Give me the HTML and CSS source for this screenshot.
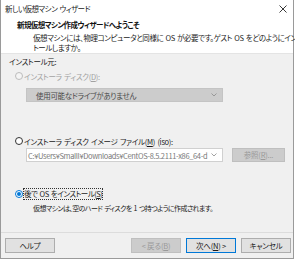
FILE: index.html
```html
<!DOCTYPE html>
<html lang="ja">
<head>
<meta charset="utf-8">
<link rel="stylesheet" href="styles.css">
</head>
<body>
<div class="window">
  <div class="titlebar">
    <span class="title">新しい仮想マシン ウィザード</span>
    <svg class="close" width="8" height="8" viewBox="0 0 8 8"><path d="M0.5 0.5 L7.5 7.5 M7.5 0.5 L0.5 7.5" stroke="#222" stroke-width="0.9" fill="none"/></svg>
  </div>
  <div class="header">
    <div class="h-title">新規仮想マシン作成ウィザードへようこそ</div>
    <div class="h-desc">
      <div class="h-line">仮想マシンには、物理コンピュータと同様に OS が必要です。ゲスト OS をどのようにインス</div>
      <div class="h-line">トールしますか。</div>
    </div>
  </div>
  <div class="content">
    <div class="label">インストール元:</div>
    <div class="radio-row r1 disabled">
      <span class="radio"></span>
      <span>インストーラ ディスク(<u>D</u>):</span>
    </div>
    <div class="combo disabled-combo">
      <span class="combo-text">使用可能なドライブがありません</span>
      <svg class="chev" width="6" height="4" viewBox="0 0 6 4"><path d="M0.5 0.5 L3 3 L5.5 0.5" stroke="#8a8a8a" stroke-width="0.8" fill="none"/></svg>
    </div>
    <div class="radio-row r2">
      <span class="radio"></span>
      <span>インストーラ ディスク イメージ ファイル(<u>M</u>) (iso):</span>
    </div>
    <div class="path-row">
      <div class="combo path-combo">
        <span class="combo-text path-text">C:¥Users¥Smalll¥Downloads¥CentOS-8.5.2111-x86_64-d</span>
        <svg class="chev" width="6" height="4" viewBox="0 0 6 4"><path d="M0.5 0.5 L3 3 L5.5 0.5" stroke="#8a8a8a" stroke-width="0.8" fill="none"/></svg>
      </div>
      <button class="btn disabled-btn browse">参照(<u>R</u>)...</button>
    </div>
    <div class="radio-row r3">
      <span class="radio checked"></span>
      <span class="focus">後で OS をインストール(<u>S</u>)</span>
    </div>
    <div class="later-desc">仮想マシンは、空のハード ディスクを 1 つ持つように作成されます。</div>
  </div>
  <div class="footer">
    <button class="btn">ヘルプ</button>
    <button class="btn disabled-btn back">&lt; 戻る(<u>B</u>)</button>
    <button class="btn default">次へ(<u>N</u>) &gt;</button>
    <button class="btn">キャンセル</button>
  </div>
</div>
</body>
</html>
```
FILE: styles.css
```css
html, body {
  margin: 0;
  padding: 0;
  background: #ffffff;
}
body {
  font-family: "Noto Sans CJK JP", "Noto Sans", sans-serif;
  font-size: 7.5px;
  font-feature-settings: "palt";
  letter-spacing: -0.3px;
  word-spacing: 1px;
  color: #1a1a1a;
}
.window {
  width: 292px;
  height: 258px;
  border-left: 1px solid #9a9a9a;
  border-right: 1px solid #9a9a9a;
  border-bottom: 1px solid #9a9a9a;
  display: flex;
  flex-direction: column;
  background: #f0f0f0;
}
.titlebar {
  height: 17px;
  background: #fff;
  display: flex;
  align-items: center;
  padding-left: 4px;
  padding-right: 6px;
}
.title {
  flex: 1;
  font-size: 7.5px;
  letter-spacing: -0.5px;
  color: #222;
}
.close {
  display: block;
}
.header {
  background: #fff;
  height: 37px;
  border-bottom: 1px solid #e4e4e4;
  box-sizing: border-box;
  padding-left: 16px;
  padding-top: 2px;
}
.h-title {
  font-weight: bold;
  font-size: 7.5px;
  letter-spacing: -0.6px;
  line-height: 12px;
  color: #111;
}
.h-desc {
  margin-top: 2px;
  padding-left: 16px;
  line-height: 10px;
  font-size: 7.5px;
  letter-spacing: -0.42px;
  color: #222;
}
.h-line {
  white-space: nowrap;
  width: max-content;
}
.content {
  flex: 1;
  padding-left: 8px;
  padding-top: 2px;
  display: flex;
  flex-direction: column;
  align-items: flex-start;
  border-bottom: 1px solid #dcdcdc;
}
.label {
  line-height: 12px;
  height: 12px;
}
.radio-row {
  display: flex;
  align-items: center;
  height: 12px;
  padding-left: 6px;
}
.r1 { margin-top: 2px; }
.r2 { margin-top: 33px; }
.r3 { margin-top: 26px; }
.disabled { color: #a2a2a2; }
.radio {
  width: 8px;
  height: 8px;
  border: 1px solid #333;
  border-radius: 50%;
  box-sizing: border-box;
  margin-right: 1px;
  background: #fff;
  position: relative;
  flex: none;
}
.disabled .radio {
  border-color: #bcbcbc;
  background: #f4f4f4;
}
.radio.checked {
  border-color: #0078d7;
}
.radio.checked::after {
  content: "";
  position: absolute;
  left: 1px;
  top: 1px;
  width: 4px;
  height: 4px;
  border-radius: 50%;
  background: #0078d7;
}
.focus {
  outline: 1px dotted #333;
  outline-offset: 0;
  line-height: 10px;
  letter-spacing: -0.5px;
}
.combo {
  width: 197px;
  height: 14px;
  box-sizing: border-box;
  display: flex;
  align-items: center;
  margin-left: 17px;
  flex: none;
}
.disabled-combo {
  margin-top: 6px;
  background: #cccccc;
  border: 1px solid #c4c4c4;
  color: #4a4a4a;
}
.combo-text {
  flex: 1;
  padding-left: 9px;
  white-space: nowrap;
  overflow: hidden;
}
.chev {
  margin-right: 5px;
  margin-left: 2px;
  flex: none;
}
.path-row {
  display: flex;
  align-items: center;
  margin-top: 1px;
}
.path-combo {
  background: #fff;
  border: 1px solid #d0d0d0;
  color: #7a7a7a;
}
.path-text {
  padding-left: 1px;
  letter-spacing: -0.35px;
}
.btn {
  font-family: "Noto Sans CJK JP", "Noto Sans", sans-serif;
  font-feature-settings: "palt";
  font-size: 7.5px;
  letter-spacing: -0.2px;
  width: 50px;
  height: 15px;
  padding: 0;
  margin: 0;
  background: #e1e1e1;
  border: 1px solid #adadad;
  color: #1a1a1a;
  line-height: 12px;
}
.disabled-btn {
  background: #cccccc;
  border-color: #bfbfbf;
  color: #9a9a9a;
}
.browse {
  margin-left: 9px;
  width: 53px;
  height: 14px;
}
.later-desc {
  margin-top: 2px;
  padding-left: 24px;
  line-height: 12px;
  font-size: 7px;
  letter-spacing: -0.6px;
}
.footer {
  height: 25px;
  box-sizing: border-box;
  display: flex;
  padding: 5px 2px 0 4px;
  gap: 5px;
}
.back { margin-left: auto; }
.default {
  border-color: #0078d7;
}
```
